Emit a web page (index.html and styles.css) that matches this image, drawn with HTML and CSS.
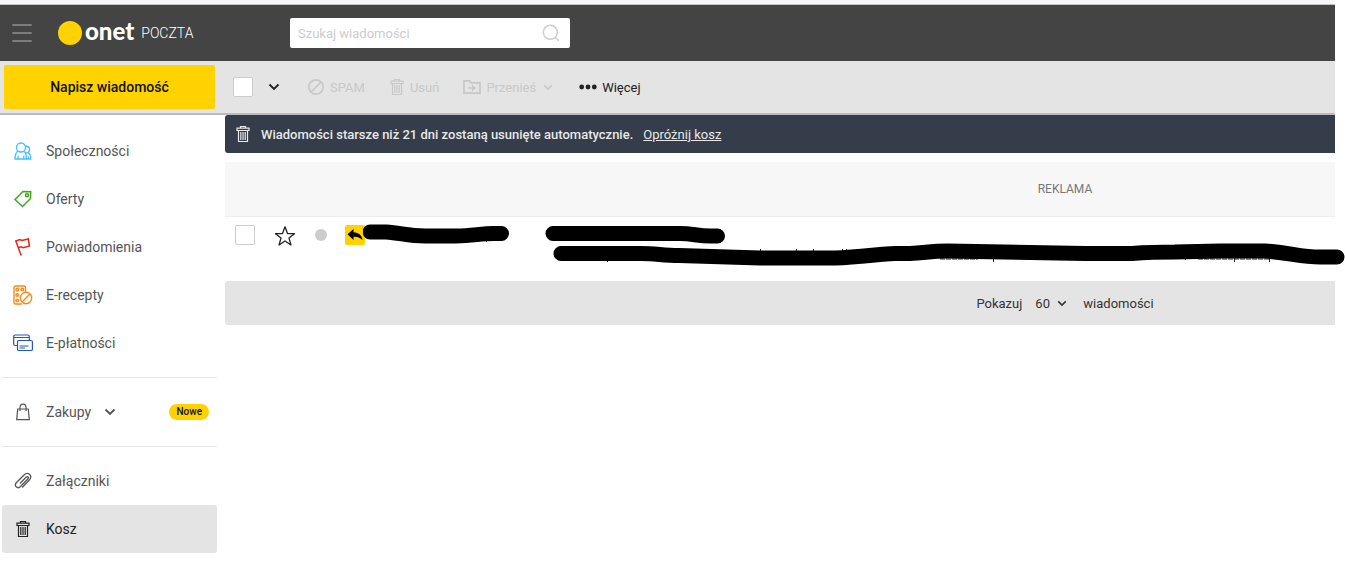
FILE: index.html
```html
<!DOCTYPE html>
<html lang="pl">
<head>
<meta charset="utf-8">
<title>Onet Poczta</title>
<link rel="stylesheet" href="styles.css">
</head>
<body>
<svg class="defs" width="0" height="0" aria-hidden="true">
  <symbol id="trash" viewBox="0 0 16 18">
    <path d="M5.500 3V1.500h5V3M2 3.200h12v2.300H2zM3.500 5.500v11h9v-11M5.800 7v8M8 7v8M10.200 7v8" fill="none" stroke="currentColor" stroke-width="1.200"/>
  </symbol>
  <symbol id="chevron" viewBox="0 0 12 8">
    <path d="M1.500 1.500 6 6l4.500-4.500" fill="none" stroke="currentColor" stroke-width="1.900"/>
  </symbol>
</svg>
<div class="page">
  <header class="topbar">
    <button class="menu" type="button" aria-label="Menu"><span></span><span></span><span></span></button>
    <a class="logo" href="#"><span class="logo-dot"></span><span class="logo-name">onet</span><span class="logo-product">POCZTA</span></a>
    <form class="search">
      <input type="text" placeholder="Szukaj wiadomości" aria-label="Szukaj wiadomości">
      <button type="button" aria-label="Szukaj">
        <svg width="18" height="18" viewBox="0 0 18 18"><g fill="none" stroke="currentColor" stroke-width="1.500"><circle cx="8.300" cy="8.300" r="7"/><path d="m13.300 13.300 3.400 3.400"/></g></svg>
      </button>
    </form>
  </header>

  <div class="toolbar">
    <div class="compose-cell"><button class="compose" type="button">Napisz wiadomość</button></div>
    <input class="check" type="checkbox" aria-label="Zaznacz wszystkie">
    <button class="tool select-more" type="button" aria-label="Opcje zaznaczania"><svg width="12" height="8"><use href="#chevron"/></svg></button>
    <button class="tool spam" type="button" disabled><svg width="18" height="18" viewBox="0 0 18 18"><g fill="none" stroke="currentColor" stroke-width="1.700"><circle cx="9" cy="9" r="7.200"/><path d="M4 14 14 4"/></g></svg>SPAM</button>
    <button class="tool delete" type="button" disabled><svg width="16" height="18"><use href="#trash"/></svg>Usuń</button>
    <button class="tool move" type="button" disabled><svg width="18" height="16" viewBox="0 0 18 16"><path d="M1 14.200V1.800h5.500l1.500 2h9v10.400zM5 9h5" fill="none" stroke="currentColor" stroke-width="1.700"/><path d="m9 5.500 4 3.500-4 3.500z" fill="currentColor"/></svg>Przenieś<svg width="10" height="7"><use href="#chevron"/></svg></button>
    <button class="tool more" type="button"><svg width="18" height="6" viewBox="0 0 18 6"><g fill="currentColor"><circle cx="2.700" cy="3" r="2.400"/><circle cx="9" cy="3" r="2.400"/><circle cx="15.300" cy="3" r="2.400"/></g></svg>Więcej</button>
  </div>

  <div class="columns">
    <nav class="sidebar">
      <a class="item" href="#"><svg class="blue" width="20" height="20" viewBox="0 0 20 20"><g fill="none" stroke="currentColor" stroke-width="1.300"><circle cx="8" cy="6.500" r="4.500"/><path d="M5 10c-2.500 1.500-3 3.500-3 8h11.500c0-4.500-.5-6.500-3-8M5 18v-3.500M10.800 18v-3.500"/><path d="M12.300 5c2.700 0 4.200 1.300 4.200 3.500 0 1.500-.7 2.500-1.500 3.200 2.300 1 2.800 2.800 2.800 6.300h-4.300M12 11.500c1 .8 1.800.8 3 .2M15.500 18v-2.500"/></g></svg>Społeczności</a>
      <a class="item" href="#"><svg class="green" width="20" height="20" viewBox="0 0 20 20"><g fill="none" stroke="currentColor" stroke-width="1.500"><path d="m2 10.500 8-8 7.700.3-.2 6.700L9.500 17.500z"/><circle cx="14" cy="6.300" r="1.500"/></g></svg>Oferty</a>
      <a class="item" href="#"><svg class="red" width="20" height="20" viewBox="0 0 20 20"><path d="M8.200 18.500 2.800 4l4-1.500 2 1 6.500-1.500L16.500 9l-6.300 1.800-2.200-1-3 1" fill="none" stroke="currentColor" stroke-width="1.500"/></svg>Powiadomienia</a>
      <a class="item" href="#"><svg class="orange" width="20" height="20" viewBox="0 0 20 20"><g fill="none" stroke="currentColor" stroke-width="1.400"><path d="M12.500 7V2.500q0-1.500-1.500-1.500H2.500Q1 1 1 2.500v15Q1 19 2.500 19H9"/><circle cx="4.200" cy="4.500" r="1.300"/><circle cx="9.300" cy="4.500" r="1.300"/><circle cx="4.200" cy="10" r="1.300"/><circle cx="4.200" cy="15.500" r="1.300"/><circle cx="13" cy="13" r="5.700"/><path d="m9 17 8-8"/></g></svg>E-recepty</a>
      <a class="item" href="#"><svg class="navy" width="20" height="20" viewBox="0 0 20 20"><g fill="none" stroke="currentColor" stroke-width="1.200"><path d="M4 12.500H2.200Q.7 12.500.7 11V3.500Q.7 2 2.200 2h12.600q1.500 0 1.500 1.500V7M.7 4.500h15.600"/><rect x="4.500" y="7.500" width="14.900" height="10" rx="1.300"/><path d="M6.500 13h9M6.500 15h5.500"/></g></svg>E-płatności</a>
      <hr>
      <a class="item" href="#"><svg width="20" height="20" viewBox="0 0 20 20"><path d="M4.700 7h10.600l1 10.700H3.700zM7 9V5.500C7 1 13 1 13 5.500V9" fill="none" stroke="currentColor" stroke-width="1.200"/></svg>Zakupy<svg class="expand" width="12" height="8"><use href="#chevron"/></svg><span class="badge">Nowe</span></a>
      <hr>
      <a class="item" href="#"><svg width="20" height="20" viewBox="0 0 20 20"><path d="m7 12.500 6-6.200c1.600-1.600 3.300.1 1.800 1.700l-7.300 7.500c-3 3-7-.8-4-4L11 4c3.800-4 9 .7 5.500 4.700l-7.300 7.800" fill="none" stroke="currentColor" stroke-width="1.300"/></svg>Załączniki</a>
      <a class="item active" href="#" aria-current="page"><svg width="20" height="18"><use href="#trash"/></svg>Kosz</a>
    </nav>

    <main class="mail">
      <div class="notice"><svg width="16" height="18"><use href="#trash"/></svg><strong>Wiadomości starsze niż 21 dni zostaną usunięte automatycznie.</strong><a href="#">Opróżnij kosz</a></div>
      <div class="ad">REKLAMA</div>
      <div class="message">
        <input class="check" type="checkbox" aria-label="Zaznacz wiadomość">
        <button class="star" type="button" aria-label="Oznacz gwiazdką"><svg width="22" height="22" viewBox="0 0 22 22"><path d="m11 1.800 2.500 6.700 7 .2-5.500 4.400 2 6.900-6-4-6 4 2-6.900L1.500 8.700l7-.2z" fill="none" stroke="currentColor" stroke-width="1.300" stroke-linejoin="round"/></svg></button>
        <span class="unread"></span>
        <span class="replied"><svg width="20" height="20" viewBox="0 0 20 20"><path d="m2.500 9.300 6-5.300v3.200c5.500.2 8.500 3.300 9 8-2-2.500-4.500-3.700-9-3.500V15z" fill="currentColor"/></svg></span>
        <svg class="redaction" width="982" height="64" viewBox="363 217 982 64" aria-hidden="true">
          <g stroke="#222"><path d="M940 259h38M1198 259h72" stroke-dasharray="5 1"/><path d="M607.500 259v3M993.500 258v4M1185.500 258v2M1234.500 258v4M1269.500 258v4M486.500 240v2M760.500 249v3M796.500 249v3M813.500 249v3M842.500 249v3M846.500 249v3"/></g>
          <g fill="none" stroke="#000" stroke-width="15" stroke-linecap="round" stroke-linejoin="round">
            <path d="M370 232h16C401 233 408 236 425 236h31C473 236 480 233.500 494 233.500h7.500"/>
            <path d="M553 233.500h127c12 0 18 2.500 30 2.500h7.500"/>
            <path d="M561 253.500h80C656 253.500 663 255.500 679 255.500L760 258h75C862 257 882 253.500 895 253.500H910C925 253 930 251 948 251L1085 253.500H1132C1145 252.500 1155 252 1175 252L1220 251H1265C1290 252.500 1300 257 1320 257H1337"/>
          </g>
        </svg>
      </div>
      <div class="pager">
        <label for="per-page">Pokazuj</label>
        <span class="select"><select id="per-page"><option>60</option></select><svg width="10" height="7"><use href="#chevron"/></svg></span>
        <span>wiadomości</span>
      </div>
    </main>
  </div>
</div>
</body>
</html>
```

FILE: styles.css
```css
* { box-sizing: border-box; }

body {
  margin: 0;
  background: #fff;
  color: #222;
  font: 13px/21px Roboto, "Liberation Sans", sans-serif;
}

button, input, select { font: inherit; color: inherit; margin: 0; }
button { padding: 0; border: 0; background: none; }
a { color: inherit; }
svg { flex: none; display: block; }
.defs { position: absolute; }

.page {
  margin-right: 10px;
  border-top: 4px solid #f7f7f9;
}

.topbar {
  display: flex;
  align-items: center;
  height: 57px;
  padding-left: 12px;
  background: #444;
  border-top: 1px solid #c4c4c4;
}

.menu { display: grid; gap: 6px; width: 20px; margin-right: 26px; }
.menu span { height: 2px; border-radius: 1px; background: #7c7c7c; }

.logo {
  display: flex;
  align-items: center;
  width: 232px;
  color: #fff;
  text-decoration: none;
}
.logo-dot { width: 24px; height: 24px; border-radius: 50%; background: #ffd200; }
.logo-name { margin: 0 7px 4px 3px; font: 900 24px/24px Lato, sans-serif; }
.logo-product { font: 300 14px/24px Roboto, sans-serif; }

.search {
  display: flex;
  align-items: center;
  width: 280px;
  height: 30px;
  padding: 0 10px 0 8px;
  border-radius: 2px;
  background: #fff;
}
.search input { flex: 1; min-width: 0; padding: 0; border: 0; outline: 0; background: none; }
.search input::placeholder { color: #ccc; opacity: 1; }
.search button { color: #ccc; }

.toolbar {
  display: flex;
  align-items: center;
  height: 54px;
  background: #e4e4e4;
  border-bottom: 2px solid #bbb;
}
.compose-cell { width: 233px; padding: 0 18px 0 4px; }
.compose {
  width: 100%;
  height: 44px;
  border-radius: 2px;
  background: #ffd200;
  color: #111;
  font-size: 14px;
  font-weight: 500;
}

.check {
  appearance: none;
  width: 20px;
  height: 20px;
  border: 1px solid #ccc;
  border-radius: 2px;
  background: #fff;
}

.tool { display: flex; align-items: center; gap: 5px; color: #222; }
.tool:disabled { color: #c8c8c8; }
.select-more { margin: 0 27px 0 15px; }
.delete { margin-left: 24px; }
.move { margin: 0 26px 0 24px; }
.move svg:last-child { margin-left: 2px; }

.columns { display: grid; grid-template-columns: 217px minmax(0, 1fr); gap: 8px; }

.sidebar { padding: 12px 0 0 2px; font-size: 14px; color: #555; }
.sidebar hr { height: 1px; margin: 10px 0; border: 0; background: #e8e8e8; }
.item {
  display: flex;
  align-items: center;
  height: 48px;
  padding: 0 8px 0 11px;
  gap: 13px;
  border-radius: 3px;
  text-decoration: none;
}
.item.active { background: #e4e4e4; color: #222; }
.badge {
  margin-left: auto;
  padding: 0 7px;
  border-radius: 8px;
  background: #ffd200;
  color: #111;
  font-size: 10px;
  line-height: 16px;
  font-weight: 500;
}
.blue { color: #42c0fb; }
.green { color: #42a61d; }
.red { color: #e3261b; }
.orange { color: #f58a1f; }
.navy { color: #2458b8; }

.notice {
  display: flex;
  align-items: center;
  gap: 10px;
  height: 38px;
  padding-left: 10px;
  border-radius: 3px 0 0 3px;
  background: #343d49;
  color: #e8e8e8;
}
.notice strong { font-weight: 500; }

.ad {
  margin-top: 9px;
  padding: 17px 0 16px 570px;
  border-bottom: 1px solid #eee;
  background: #f7f7f7;
  color: #777;
  font-size: 12px;
  text-align: center;
}

.message {
  position: relative;
  display: flex;
  align-items: center;
  height: 64px;
  padding: 0 0 28px 10px;
}
.star { margin: 2px 19px 0; color: #222; }
.unread { width: 12px; height: 12px; margin-right: 18px; border-radius: 50%; background: #ccc; }
.replied { border-radius: 2px; background: #ffd200; color: #000; }
.redaction { position: absolute; top: 0; left: 138px; }

.pager {
  display: flex;
  align-items: center;
  justify-content: center;
  gap: 13px;
  height: 44px;
  padding-left: 570px;
  border-radius: 3px 0 0 3px;
  background: #e4e4e4;
  color: #333;
}
.select { display: flex; align-items: center; margin-right: 3px; }
.select select { appearance: none; width: 22px; padding: 0; border: 0; background: none; }
.select svg { pointer-events: none; }
```
